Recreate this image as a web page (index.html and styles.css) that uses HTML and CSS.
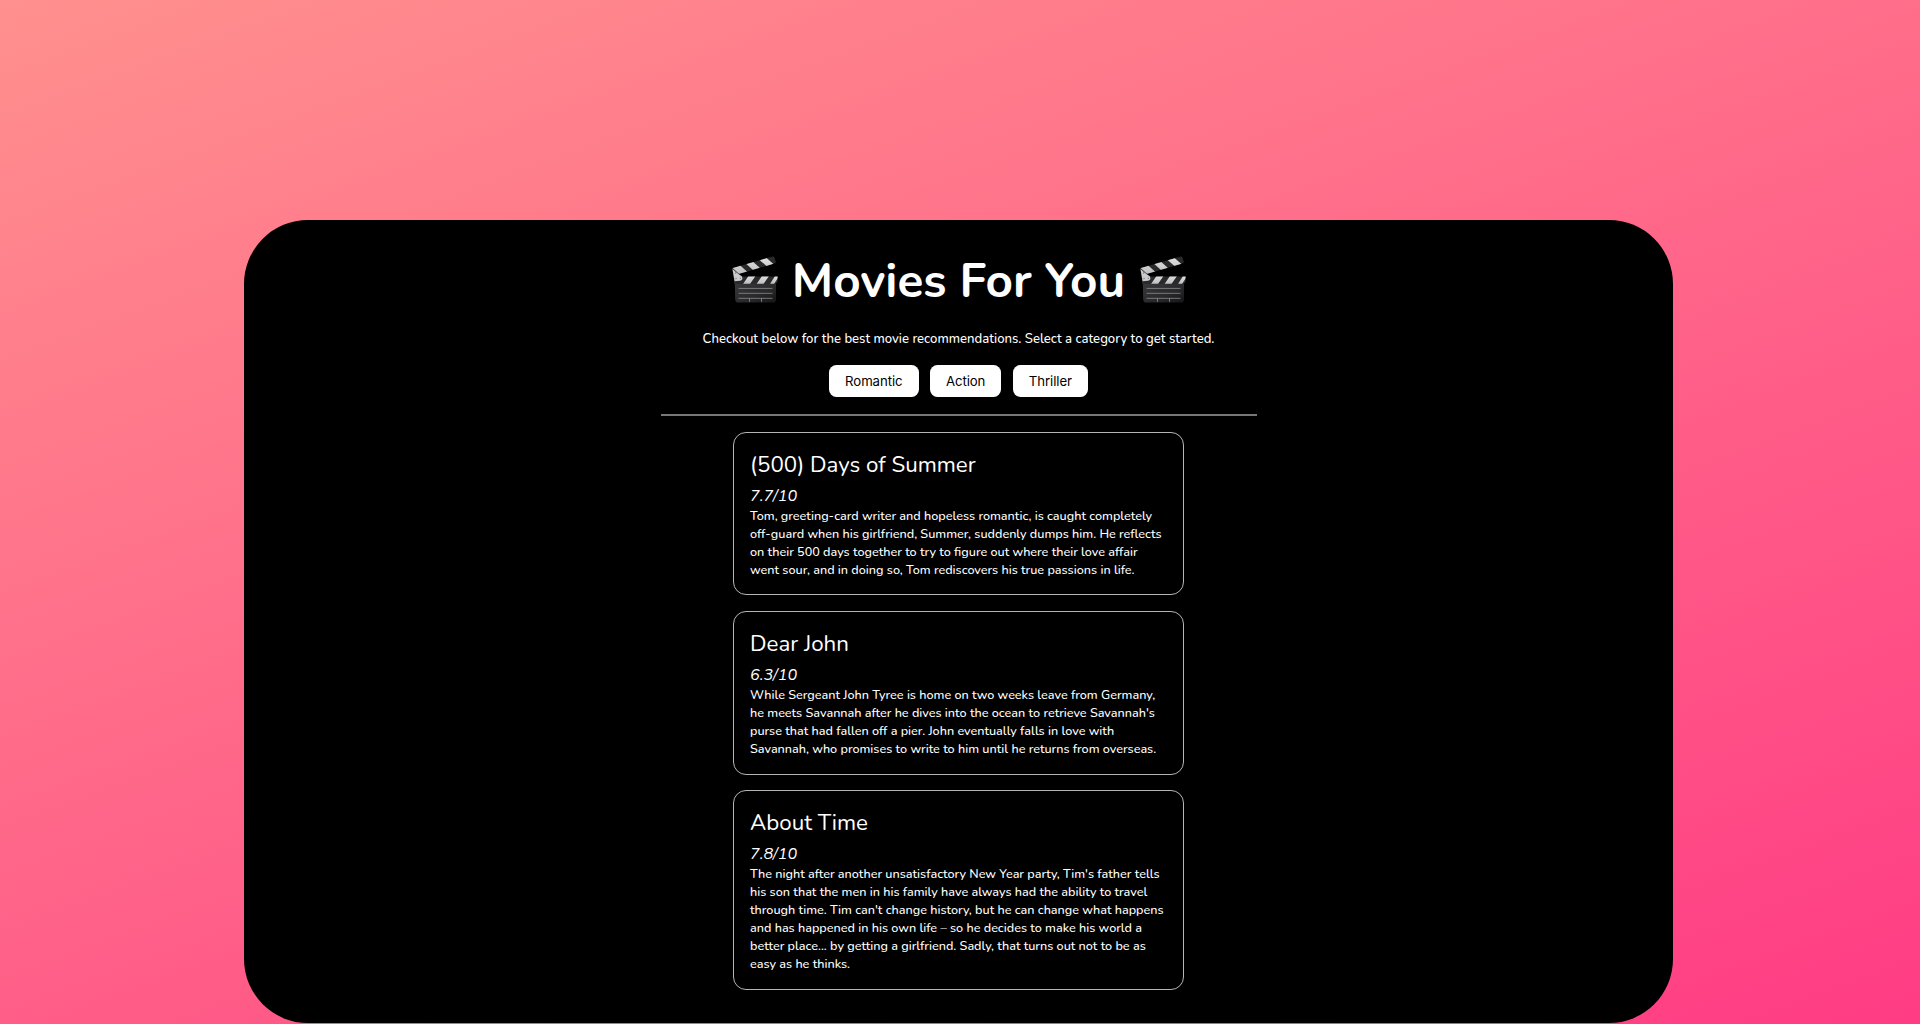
FILE: index.html
```
<!DOCTYPE html>
<html lang="en">
<head>
<meta charset="utf-8">
<title>Movies For You</title>
<link rel="stylesheet" href="styles.css">
</head>
<body>
<svg width="0" height="0" class="defs" aria-hidden="true">
  <defs>
    <linearGradient id="slate" x1="0" y1="0" x2="1" y2="1">
      <stop offset="0" stop-color="#3a3a3c"/><stop offset=".6" stop-color="#29292b"/><stop offset="1" stop-color="#151516"/>
    </linearGradient>
    <linearGradient id="stripe" x1="0" y1="0" x2="0" y2="1">
      <stop offset="0" stop-color="#e0e0e0"/><stop offset="1" stop-color="#bdbdbd"/>
    </linearGradient>
    <clipPath id="arm"><path d="M1 12.2L40.8 0.7Q43 0 43.6 2L44.8 5.4Q45 7 43.4 7.6L11 17L5 18.5Q1 16 1 12.2Z"/></clipPath>
    <clipPath id="bar"><path d="M3 20.4H46.6V26L45 27.8H3Z"/></clipPath>
    <symbol id="clapper" viewBox="0 0 47 47">
      <path d="M3.8 26H45V43.5Q45 46.6 42 46.6H7.5Q4.4 46.6 4.2 43.5Z" fill="url(#slate)"/>
      <g clip-path="url(#arm)">
        <path d="M0 0H47V20H0Z" fill="#29292b"/>
        <path d="M1 11.5L9 9.2L17 16.5L9 18.7ZM14.5 7.3L21.5 5.3L29.5 12.5L22.5 14.5ZM28 3.4L35 1.4L43 8.6L36 10.6Z" fill="url(#stripe)"/>
      </g>
      <g clip-path="url(#bar)">
        <path d="M3 20H47V28H3Z" fill="#29292b"/>
        <path d="M17.5 20H24.5L19 28H12ZM31 20H38L32.5 28H25.5ZM44 20H47V22L43 28H39Z" fill="url(#stripe)"/>
      </g>
      <path d="M1.5 13L5.5 16.5L11 20.5Q12.5 24 9 24.8L3.6 25.3L2.4 19Z" fill="#c9cbcd"/>
      <circle cx="4.6" cy="17" r=".7" fill="#777"/><circle cx="5" cy="22.5" r=".7" fill="#777"/><circle cx="9.4" cy="22.2" r=".7" fill="#888"/>
      <path d="M7.5 32.4H41.5M7.5 37.3H41.5M7.5 42.3H41.5M18.5 42.2V45.8M30.5 42.2V45.8" fill="none" stroke="#8e8e90" stroke-width=".8"/>
    </symbol>
  </defs>
</svg>
<main class="panel">
  <h1 class="heading">
    <svg class="heading-icon" aria-hidden="true"><use href="#clapper"/></svg>
    <span>Movies For You</span>
    <svg class="heading-icon" aria-hidden="true"><use href="#clapper"/></svg>
  </h1>
  <p class="intro">Checkout below for the best movie recommendations. Select a category to get started.</p>
  <nav class="categories">
    <button class="category">Romantic</button>
    <button class="category">Action</button>
    <button class="category">Thriller</button>
  </nav>
  <hr class="divider">
  <section class="movies">
    <article class="movie">
      <h2 class="name">(500) Days of Summer</h2>
      <p class="rating">7.7/10</p>
      <p class="plot">Tom, greeting-card writer and hopeless romantic, is caught completely<br>off-guard when his girlfriend, Summer, suddenly dumps him. He reflects<br>on their 500 days together to try to figure out where their love affair<br>went sour, and in doing so, Tom rediscovers his true passions in life.</p>
    </article>
    <article class="movie">
      <h2 class="name">Dear John</h2>
      <p class="rating">6.3/10</p>
      <p class="plot">While Sergeant John Tyree is home on two weeks leave from Germany,<br>he meets Savannah after he dives into the ocean to retrieve Savannah's<br>purse that had fallen off a pier. John eventually falls in love with<br>Savannah, who promises to write to him until he returns from overseas.</p>
    </article>
    <article class="movie">
      <h2 class="name">About Time</h2>
      <p class="rating">7.8/10</p>
      <p class="plot">The night after another unsatisfactory New Year party, Tim's father tells<br>his son that the men in his family have always had the ability to travel<br>through time. Tim can't change history, but he can change what happens<br>and has happened in his own life – so he decides to make his world a<br>better place... by getting a girlfriend. Sadly, that turns out not to be as<br>easy as he thinks.</p>
    </article>
  </section>
</main>
</body>
</html>
```
FILE: styles.css
```
* { box-sizing: border-box; }

body {
  margin: 0;
  height: 1024px;
  padding: 220px 247px 0 244px;
  overflow: hidden;
  background: linear-gradient(160deg, #ff908e, #ff3c84);
  color: #fff;
  font-family: Nunito, "Noto Sans", sans-serif;
}

.defs { display: block; height: 0; }

.panel {
  display: flex;
  flex-direction: column;
  align-items: center;
  height: 803.4px;
  padding-top: 29px;
  border-radius: 64px;
  background: #000;
}

.heading {
  display: flex;
  align-items: flex-start;
  gap: 14.3px;
  height: 65px;
  margin: 0;
  font-size: 47.7px;
  font-weight: 700;
  line-height: 65px;
}

.heading-icon {
  width: 47px;
  height: 47px;
  margin-top: 7px;
}

.intro {
  margin: 16px 0 0;
  font-size: 13.14px;
  font-weight: 500;
  line-height: 19px;
}

.categories {
  display: flex;
  gap: 11.3px;
  margin-top: 16px;
}

.category {
  height: 32px;
  padding: 0 16.1px;
  border: 0;
  border-radius: 7.5px;
  background: #fff;
  color: #000;
  font: 400 13.2px Inter, sans-serif;
  letter-spacing: -0.08px;
}

.divider {
  width: 596px;
  height: 2px;
  margin: 17px 0 0;
  border: 0;
  background: #777;
}

.movies {
  display: flex;
  flex-direction: column;
  gap: 15.8px;
  width: 451px;
  margin-top: 16px;
}

.movie {
  padding: 16px;
  border: 1px solid #b5b5b8;
  border-radius: 13px;
}

.name {
  margin: 0;
  font-size: 22.3px;
  font-weight: 400;
  line-height: 31px;
}

.rating {
  margin: 5px 0 0;
  font-size: 16.2px;
  font-style: italic;
  font-weight: 450;
  line-height: 22px;
}

.plot {
  margin: 0;
  font-size: 12.63px;
  font-weight: 500;
  line-height: 17.86px;
  white-space: nowrap;
}
```
